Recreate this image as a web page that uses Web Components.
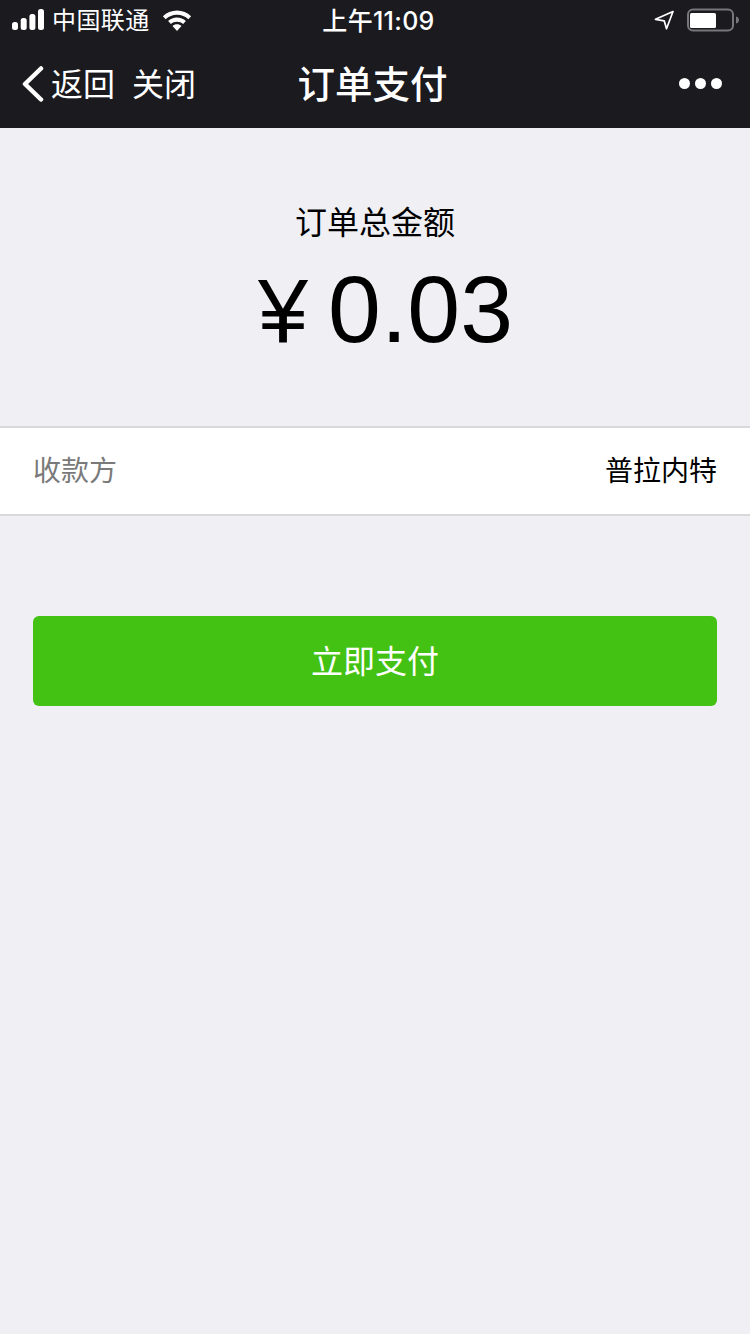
<!DOCTYPE html>
<html lang="zh">
<head>
<meta charset="utf-8">
<title>订单支付</title>
<style>
    html, body { margin: 0; padding: 0; }
    body {
        width: 750px;
        min-height: 1334px;
        background: #efeff4;
        font-family: "Liberation Sans", "Noto Sans CJK SC", sans-serif;
    }
</style>
</head>
<body>
<status-bar carrier="中国联通" time="上午11:09"></status-bar>
<nav-bar title="订单支付"></nav-bar>
<order-amount label="订单总金额" currency="¥" amount="0.03"></order-amount>
<info-row label="收款方">普拉内特</info-row>
<pay-button>立即支付</pay-button>

<script>
class StatusBar extends HTMLElement {
    constructor() {
        super();
        this.attachShadow({ mode: "open" });
    }

    connectedCallback() {
        const carrier = this.getAttribute('carrier') || "";
        const time = this.getAttribute('time') || "";

        this.shadowRoot.innerHTML = `
            <style>
                :host {
                    display: grid;
                    grid-template-columns: 1fr auto 1fr;
                    align-items: center;
                    height: 40px;
                    padding: 0 11px 0 12px;
                    background: #1a1a1f;
                    color: #fff;
                    font-family: "Inter", "Noto Sans CJK SC", sans-serif;
                }
                .left, .right { display: flex; align-items: center; }
                .right { justify-content: flex-end; }
                .carrier { font-size: 24px; margin: 0 12px 0 7px; padding-top: 2px; line-height: 38px; letter-spacing: 0.4px; }
                .time { font-size: 25px; font-weight: 500; padding-top: 2px; line-height: 38px; letter-spacing: 0.3px; margin-left: 6px; }
                svg { display: block; }
                .arrow { margin-right: 12px; }
            </style>
            <div class="left">
                <svg width="33" height="22" viewBox="0 0 33 22" fill="#fff">
                    <rect x="0" y="13" width="6" height="8" rx="2.5"/>
                    <rect x="8.700" y="9" width="6" height="12" rx="2.5"/>
                    <rect x="17.400" y="5" width="6" height="16" rx="2.5"/>
                    <rect x="26" y="0" width="6" height="21" rx="2.5"/>
                </svg>
                <span class="carrier">${carrier}</span>
                <svg width="30" height="23" viewBox="0 0 28 21.500" fill="#fff">
                    <path d="M14 1.500C8.900 1.500 4.300 3.500 .8 6.700l2.600 2.800C6.200 7 9.900 5.400 14 5.400s7.800 1.600 10.600 4.100l2.600-2.800C23.700 3.500 19.100 1.500 14 1.500z"/>
                    <path d="M14 8C10.800 8 7.900 9.200 5.700 11.200l2.600 2.800C9.800 12.700 11.800 11.900 14 11.900s4.200.8 5.700 2.100l2.600-2.800C20.100 9.200 17.200 8 14 8z"/>
                    <path d="M14 14.300c-1.600 0-3.100.6-4.200 1.600l4.200 4.600 4.200-4.600c-1.100-1-2.600-1.600-4.200-1.600z"/>
                </svg>
            </div>
            <span class="time">${time}</span>
            <div class="right">
                <svg class="arrow" width="20" height="20" viewBox="0 0 20 20" fill="none" stroke="#fff" stroke-width="1.700" stroke-linejoin="round">
                    <path d="M19 1.500 1.500 9.300l8.700 1.500 2.300 8z"/>
                </svg>
                <svg width="53" height="24" viewBox="0 0 53 24" fill="none">
                    <rect x="2" y="1.500" width="45" height="21" rx="5" stroke="#77777b" stroke-width="2"/>
                    <rect x="4" y="5" width="26" height="15" rx="1.500" fill="#fff"/>
                    <path d="M50 8.500c2 .4 3 2 3 3.500s-1 3.100-3 3.500z" fill="#77777b"/>
                </svg>
            </div>
        `;
    }
}
customElements.define('status-bar', StatusBar);

class NavBar extends HTMLElement {
    constructor() {
        super();
        this.attachShadow({ mode: "open" });
    }

    connectedCallback() {
        const title = this.getAttribute('title') || "";

        this.shadowRoot.innerHTML = `
            <style>
                :host {
                    display: grid;
                    grid-template-columns: 1fr auto 1fr;
                    align-items: center;
                    height: 88px;
                    padding: 0 28px 4px 22px;
                    box-sizing: border-box;
                    background: #1a1a1f;
                    color: #fff;
                    font-family: "Noto Sans CJK SC", sans-serif;
                }
                .left { display: flex; align-items: center; font-size: 32px; font-weight: 400; }
                .back { margin: 4px 7px 0 0; }
                .close { margin-left: 17px; }
                .title { font-size: 37.500px; font-weight: 500; margin: 0 0 2px 1px; }
                .more { display: flex; gap: 5px; justify-content: flex-end; margin-top: 2px; }
                .more i { width: 11px; height: 11px; border-radius: 50%; background: #fff; }
                svg { display: block; }
            </style>
            <div class="left">
                <svg class="back" width="22" height="36" viewBox="0 0 22 36" fill="none" stroke="#fff" stroke-width="4.500" stroke-linecap="round" stroke-linejoin="round">
                    <path d="M19 2.500 3 18l16 15.500"/>
                </svg>
                <span>返回</span>
                <span class="close">关闭</span>
            </div>
            <span class="title">${title}</span>
            <div class="more"><i></i><i></i><i></i></div>
        `;
    }
}
customElements.define('nav-bar', NavBar);

class OrderAmount extends HTMLElement {
    constructor() {
        super();
        this.attachShadow({ mode: "open" });
    }

    connectedCallback() {
        const label = this.getAttribute('label') || "";
        const currency = this.getAttribute('currency') || "¥";
        const amount = this.getAttribute('amount') || "0.00";

        this.shadowRoot.innerHTML = `
            <style>
                :host {
                    display: flex;
                    flex-direction: column;
                    align-items: center;
                    height: 298px;
                    padding-top: 68px;
                    box-sizing: border-box;
                    color: #000;
                }
                .label {
                    font-family: "Noto Sans CJK SC", sans-serif;
                    font-weight: 400;
                    font-size: 32px;
                    line-height: 48px;
                }
                .amount {
                    font-family: "Liberation Sans", sans-serif;
                    font-size: 95px;
                    line-height: 110px;
                    margin: 10px 0 0 21px;
                    display: flex;
                    align-items: baseline;
                    gap: 20px;
                }
                .currency { font-size: 90px; }
            </style>
            <span class="label">${label}</span>
            <div class="amount"><span class="currency">${currency}</span><span>${amount}</span></div>
        `;
    }
}
customElements.define('order-amount', OrderAmount);

class InfoRow extends HTMLElement {
    constructor() {
        super();
        this.attachShadow({ mode: "open" });
    }

    connectedCallback() {
        const label = this.getAttribute('label') || "";

        this.shadowRoot.innerHTML = `
            <style>
                :host {
                    display: flex;
                    justify-content: space-between;
                    align-items: center;
                    height: 90px;
                    padding: 0 33px 4px;
                    box-sizing: border-box;
                    background: #fff;
                    border-top: 2px solid #d9d9dc;
                    border-bottom: 2px solid #d9d9dc;
                    font-family: "Noto Sans CJK SC", sans-serif;
                    font-weight: 400;
                    font-size: 28px;
                    color: #000;
                }
                .label { color: #7a7a7a; }
            </style>
            <span class="label">${label}</span>
            <span><slot></slot></span>
        `;
    }
}
customElements.define('info-row', InfoRow);

class PayButton extends HTMLElement {
    constructor() {
        super();
        this.attachShadow({ mode: "open" });
    }

    connectedCallback() {
        this.shadowRoot.innerHTML = `
            <style>
                :host {
                    display: block;
                    margin: 100px 33px 0;
                }
                .btn {
                    display: flex;
                    align-items: center;
                    justify-content: center;
                    height: 90px;
                    padding-bottom: 5px;
                    box-sizing: border-box;
                    border-radius: 6px;
                    background: #44c214;
                    color: #fff;
                    font-family: "Noto Sans CJK SC", sans-serif;
                    font-weight: 400;
                    font-size: 32px;
                }
            </style>
            <div class="btn"><slot></slot></div>
        `;
    }
}
customElements.define('pay-button', PayButton);
</script>
</body>
</html>
